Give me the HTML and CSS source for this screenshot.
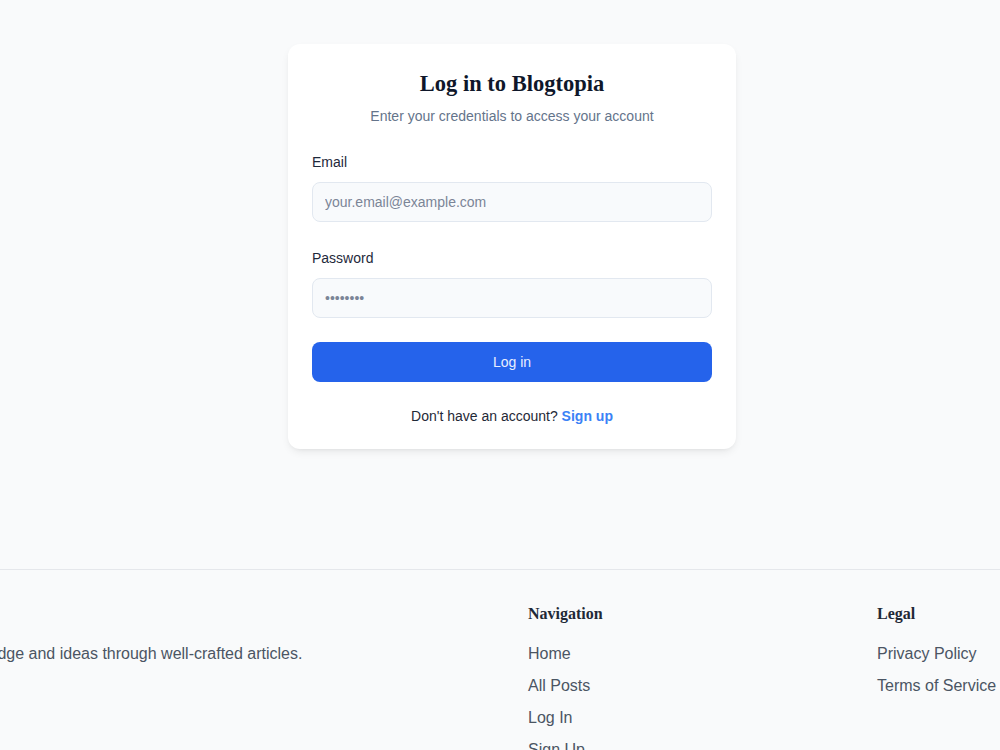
FILE: index.html
```html
<!DOCTYPE html>
<html lang="en">
<head>
  <meta charset="UTF-8" />
  <title>Log in - Blogtopia</title>
  <link rel="stylesheet" href="styles.css">
</head>
<body>
  <div class="page">
    <main class="main">
      <div class="card">
        <div class="card-header">
          <h1>Log in to Blogtopia</h1>
          <p class="subtitle">Enter your credentials to access your account</p>
        </div>

        <form class="login-form">
          <div class="field">
            <label for="email">Email</label>
            <input type="email" id="email" placeholder="your.email@example.com" />
          </div>
          <div class="field">
            <label for="password">Password</label>
            <input type="password" id="password" placeholder="••••••••" />
          </div>
          <button type="button" class="btn-primary">Log in</button>
        </form>

        <p class="signup">Don't have an account? <a href="#">Sign up</a></p>
      </div>
    </main>

    <footer class="footer">
      <div class="footer-inner">
        <div class="footer-col">
          <h4>Blogtopia</h4>
          <p class="footer-desc">Sharing knowledge and ideas through well-crafted articles.</p>
        </div>
        <div class="footer-col">
          <h4>Navigation</h4>
          <ul>
            <li><a href="#">Home</a></li>
            <li><a href="#">All Posts</a></li>
            <li><a href="#">Log In</a></li>
            <li><a href="#">Sign Up</a></li>
          </ul>
        </div>
        <div class="footer-col">
          <h4>Legal</h4>
          <ul>
            <li><a href="#">Privacy Policy</a></li>
            <li><a href="#">Terms of Service</a></li>
          </ul>
        </div>
      </div>
    </footer>
  </div>
</body>
</html>
```

FILE: styles.css
```css
html, body { margin: 0; padding: 0; overflow: hidden; }
body { font-family: "Liberation Sans", Arial, sans-serif; background: #f9fafb; color: #1f2937; }
.page { width: 1024px; }

/* Login card */
.main { padding: 44px 0 120px; }
.card {
  width: 448px;
  box-sizing: border-box;
  margin: 0 auto;
  background: #fff;
  border-radius: 12px;
  padding: 24px 24px 23px;
  box-shadow: 0 4px 10px -2px rgba(0,0,0,0.09), 0 2px 4px -2px rgba(0,0,0,0.06);
}
.card-header { text-align: center; margin-bottom: 25px; }
.card-header h1 {
  font-family: "Liberation Serif", "Times New Roman", serif;
  font-size: 22.5px;
  line-height: 32px;
  font-weight: bold;
  color: #0f172a;
  margin: 0;
}
.subtitle { font-size: 14px; line-height: 20px; color: #64748b; margin: 6px 0 0; }

.field { margin-bottom: 25px; }
.field label { display: block; font-size: 14px; line-height: 20px; padding-top: 1px; color: #1e293b; margin-bottom: 10px; }
.field input {
  display: block;
  width: 100%;
  height: 40px;
  box-sizing: border-box;
  padding: 0 12px;
  font-family: inherit;
  font-size: 14px;
  color: #1e293b;
  background: #f8fafc;
  border: 1px solid #e2e8f0;
  border-radius: 8px;
  outline: none;
}
.field input::placeholder { color: #7b8597; }
.login-form .field:nth-child(2) { margin-bottom: 24px; }

.btn-primary {
  display: block;
  width: 100%;
  height: 40px;
  border: none;
  border-radius: 8px;
  background: #2563eb;
  color: #e8eeff;
  font-family: inherit;
  font-size: 14px;
  cursor: pointer;
}
.signup { text-align: center; font-size: 14px; line-height: 20px; color: #1f2937; margin: 24px 0 0; }
.signup a { color: #3b82f6; font-weight: bold; text-decoration: none; }

/* Footer */
.footer { border-top: 1px solid #e5e7eb; display: flex; justify-content: center; padding: 32px 0 40px; }
.footer-inner {
  flex: 0 0 1268px;
  margin-left: 32px;
  display: grid;
  grid-template-columns: 2fr 1fr 1fr;
  gap: 64px;
}
.footer-col h4 {
  font-family: "Liberation Serif", "Times New Roman", serif;
  font-size: 16px;
  line-height: 24px;
  font-weight: bold;
  color: #1f2937;
  margin: 0 0 16px;
}
.footer-desc { font-size: 16px; line-height: 24px; color: #4b5563; margin: 0 0 0 -6px; white-space: nowrap; }
.footer-col ul { list-style: none; margin: 0; padding: 0; display: flex; flex-direction: column; gap: 8px; }
.footer-col li { font-size: 16px; line-height: 24px; }
.footer-col a { color: #4b5563; text-decoration: none; }
```
